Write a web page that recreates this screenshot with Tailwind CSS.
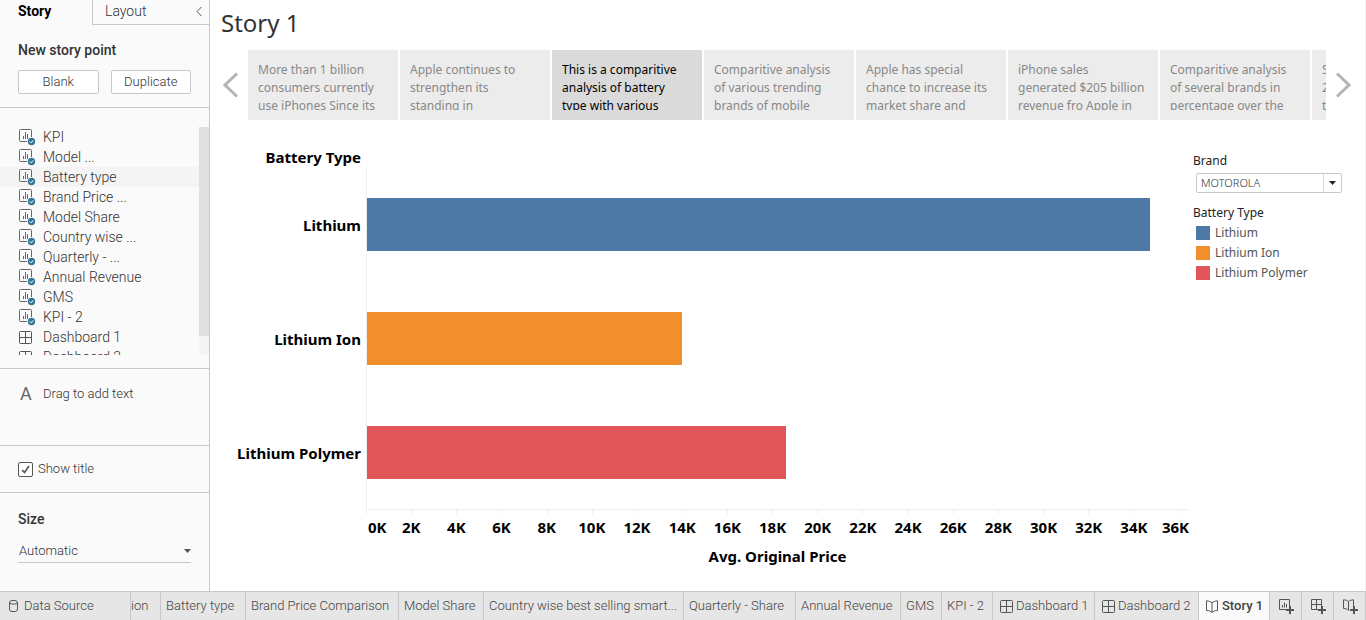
<!DOCTYPE html>
<html lang="en">
<head>
<meta charset="utf-8">
<title>Story 1</title>
<script src="https://cdn.jsdelivr.net/npm/@tailwindcss/browser@4"></script>
</head>
<body class="flex min-h-screen flex-col bg-white font-['Roboto',sans-serif] text-[13px] font-light text-[#333]">
<svg class="hidden" aria-hidden="true">
  <symbol id="sheet" viewBox="0 0 17 17">
    <path d="M12.500 8V1.500a1 1 0 0 0-1-1h-10a1 1 0 0 0-1 1v10a1 1 0 0 0 1 1H8" fill="none" stroke="#666"/>
    <path d="M4.500 7v3M6.500 3v7M8.500 5v5" stroke="#666" fill="none"/>
    <circle cx="12.500" cy="12.500" r="3.700" fill="#36789a"/>
    <path d="M10.800 12.500l1.300 1.300 2.200-2.400" stroke="#fff" fill="none"/>
  </symbol>
  <symbol id="dash" viewBox="0 0 13 13">
    <path d="M1.500.5h10a1 1 0 0 1 1 1v10a1 1 0 0 1-1 1h-10a1 1 0 0 1-1-1v-10a1 1 0 0 1 1-1zM6.500.5v12M.5 6.500h12" fill="none" stroke="#555"/>
  </symbol>
  <symbol id="book" viewBox="0 0 12 13">
    <path d="M6 2.800C5 1.800 3 1 .5.800v9.700c2.500 0 4.200.6 5.500 2 1.300-1.400 3-2 5.500-2V.8C9 1 7 1.800 6 2.800zv9.500" fill="none" stroke="#555"/>
  </symbol>
</svg>

<div class="flex flex-1">
  <aside class="flex w-[210px] shrink-0 flex-col border-r border-[#c8c8c8] bg-[#fafafa]">
    <div class="flex h-[25px] text-sm">
      <button class="w-[92px] pb-1 pl-[18px] text-left font-bold text-black">Story</button>
      <button class="flex flex-1 items-center justify-between border-b border-l border-[#c8c8c8] pr-1.5 pb-0.5 pl-3">Layout
        <svg class="h-[11px] w-2" viewBox="0 0 8 11" fill="none" stroke="#555"><path d="M6.500 1L2 5.500 6.500 10"/></svg>
      </button>
    </div>
    <section class="border-b border-[#c8c8c8] px-[18px] pt-[15px] pb-[13px]">
      <h2 class="text-sm leading-5 font-medium">New story point</h2>
      <div class="mt-2.5 flex gap-3">
        <button class="h-6 flex-1 rounded-xs border border-[#c8c8c8] bg-white">Blank</button>
        <button class="h-6 flex-1 rounded-xs border border-[#c8c8c8] bg-white">Duplicate</button>
      </div>
    </section>
    <section class="border-b border-[#c8c8c8] pt-[19px] pb-[13px]">
      <div class="flex h-[228px] overflow-hidden">
        <ul class="flex-1 text-sm leading-5">
          <li class="flex h-5 items-center pl-[19px]"><svg class="mr-[7px] h-[17px] w-[17px]"><use href="#sheet"/></svg>KPI</li>
          <li class="flex h-5 items-center pl-[19px]"><svg class="mr-[7px] h-[17px] w-[17px]"><use href="#sheet"/></svg>Model ...</li>
          <li class="flex h-5 items-center bg-[#f4f4f4] pl-[19px]"><svg class="mr-[7px] h-[17px] w-[17px]"><use href="#sheet"/></svg>Battery type</li>
          <li class="flex h-5 items-center pl-[19px]"><svg class="mr-[7px] h-[17px] w-[17px]"><use href="#sheet"/></svg>Brand Price ...</li>
          <li class="flex h-5 items-center pl-[19px]"><svg class="mr-[7px] h-[17px] w-[17px]"><use href="#sheet"/></svg>Model Share</li>
          <li class="flex h-5 items-center pl-[19px]"><svg class="mr-[7px] h-[17px] w-[17px]"><use href="#sheet"/></svg>Country wise ...</li>
          <li class="flex h-5 items-center pl-[19px]"><svg class="mr-[7px] h-[17px] w-[17px]"><use href="#sheet"/></svg>Quarterly - ...</li>
          <li class="flex h-5 items-center pl-[19px]"><svg class="mr-[7px] h-[17px] w-[17px]"><use href="#sheet"/></svg>Annual Revenue</li>
          <li class="flex h-5 items-center pl-[19px]"><svg class="mr-[7px] h-[17px] w-[17px]"><use href="#sheet"/></svg>GMS</li>
          <li class="flex h-5 items-center pl-[19px]"><svg class="mr-[7px] h-[17px] w-[17px]"><use href="#sheet"/></svg>KPI - 2</li>
          <li class="flex h-5 items-center pl-[19px]"><svg class="mr-[11px] h-[13px] w-[13px]"><use href="#dash"/></svg>Dashboard 1</li>
          <li class="flex h-5 items-center pl-[19px]"><svg class="mr-[11px] h-[13px] w-[13px]"><use href="#dash"/></svg>Dashboard 2</li>
        </ul>
        <div class="w-2.5 bg-[#f4f4f4]"><div class="h-[209px] bg-[#e0e0e0]"></div></div>
      </div>
    </section>
    <section class="flex h-[77px] items-start border-b border-[#c8c8c8] pt-[15px] leading-5">
      <span class="w-[43px] pl-5 text-lg leading-5 font-normal text-[#666]">A</span>Drag to add text
    </section>
    <section class="flex h-[47px] items-center border-b border-[#c8c8c8] pl-[18px]">
      <label class="flex items-center gap-[5px]">
        <span class="grid h-[15px] w-[15px] place-items-center">
          <input type="checkbox" checked class="col-start-1 row-start-1 h-[15px] w-[15px] appearance-none rounded-xs border border-[#555] bg-white">
          <svg class="pointer-events-none col-start-1 row-start-1 h-[9px] w-[9px]" viewBox="0 0 9 9" fill="none" stroke="#555" stroke-width="1.600"><path d="M1 5l2.500 2.500L8 1"/></svg>
        </span>Show title
      </label>
    </section>
    <section class="px-[18px] pt-4">
      <label for="size" class="block text-sm leading-5 font-medium">Size</label>
      <div class="mt-2.5 flex h-6 items-center border-b border-[#c8c8c8]">
        <select id="size" class="w-full flex-1 appearance-none bg-transparent pl-px outline-none"><option>Automatic</option></select>
        <svg class="pointer-events-none h-1 w-[7px]" viewBox="0 0 7 4" fill="#555"><path d="M0 0h7L3.500 4z"/></svg>
      </div>
    </section>
  </aside>

  <main class="flex min-w-0 flex-1 flex-col border-r border-[#f0f0f0] font-['Noto_Sans',sans-serif] font-normal">
    <h1 class="mt-[7px] pl-[11px] text-2xl leading-8">Story 1</h1>
    <nav class="mt-[11px] flex h-[70px] items-center">
      <button aria-label="Previous" class="flex w-[38px] shrink-0 pl-3"><svg class="h-[26px] w-4" viewBox="0 0 16 26" fill="none" stroke="#b4b4b4" stroke-width="3"><path d="M15 1.500L3 13l12 11.500"/></svg></button>
      <div class="flex min-w-0 flex-1 gap-0.5 overflow-hidden text-left text-xs leading-[18px] text-[#888]">
        <button class="h-[70px] w-[150px] shrink-0 bg-[#ececec] px-2.5 pt-[11px] pb-2.5 text-left"><span class="block h-[49px] overflow-hidden whitespace-nowrap">More than 1 billion<br>consumers currently<br>use iPhones Since its</span></button>
        <button class="h-[70px] w-[150px] shrink-0 bg-[#ececec] px-2.5 pt-[11px] pb-2.5 text-left"><span class="block h-[49px] overflow-hidden whitespace-nowrap">Apple continues to<br>strengthen its<br>standing in</span></button>
        <button class="h-[70px] w-[150px] shrink-0 bg-[#dadada] px-2.5 pt-[11px] pb-2.5 text-left text-black"><span class="block h-[49px] overflow-hidden whitespace-nowrap">This is a comparitive<br>analysis of battery<br>type with various</span></button>
        <button class="h-[70px] w-[150px] shrink-0 bg-[#ececec] px-2.5 pt-[11px] pb-2.5 text-left"><span class="block h-[49px] overflow-hidden whitespace-nowrap">Comparitive analysis<br>of various trending<br>brands of mobile</span></button>
        <button class="h-[70px] w-[150px] shrink-0 bg-[#ececec] px-2.5 pt-[11px] pb-2.5 text-left"><span class="block h-[49px] overflow-hidden whitespace-nowrap">Apple has special<br>chance to increase its<br>market share and</span></button>
        <button class="h-[70px] w-[150px] shrink-0 bg-[#ececec] px-2.5 pt-[11px] pb-2.5 text-left"><span class="block h-[49px] overflow-hidden whitespace-nowrap">iPhone sales<br>generated $205 billion<br>revenue fro Apple in</span></button>
        <button class="h-[70px] w-[150px] shrink-0 bg-[#ececec] px-2.5 pt-[11px] pb-2.5 text-left"><span class="block h-[49px] overflow-hidden whitespace-nowrap">Comparitive analysis<br>of several brands in<br>percentage over the</span></button>
        <button class="h-[70px] w-[150px] shrink-0 bg-[#ececec] px-2.5 pt-[11px] pb-2.5 text-left"><span class="block h-[49px] overflow-hidden whitespace-nowrap">S<br>2<br>t</span></button>
      </div>
      <button aria-label="Next" class="flex w-[39px] shrink-0 pl-2.5"><svg class="h-[26px] w-4" viewBox="0 0 16 26" fill="none" stroke="#b4b4b4" stroke-width="3"><path d="M1 1.500L13 13 1 24.500"/></svg></button>
    </nav>

    <div class="flex flex-1">
      <section class="flex min-w-0 flex-1 flex-col pt-[26px] pb-6 text-[15px] font-bold text-black">
        <h2 class="w-[151px] text-right leading-[22px]">Battery Type</h2>
        <div class="flex flex-1">
          <div class="flex w-[156px] shrink-0 flex-col pr-[5px] text-right">
            <div class="flex flex-1 items-center justify-end">Lithium</div>
            <div class="flex flex-1 items-center justify-end">Lithium Ion</div>
            <div class="flex flex-1 items-center justify-end">Lithium Polymer</div>
          </div>
          <div class="flex min-w-0 flex-1 flex-col border-b border-l border-[#efefef]">
            <div class="flex flex-1 items-center"><div class="h-[53px] bg-[#4e79a7]" style="width:95.200%"></div></div>
            <div class="flex flex-1 items-center"><div class="h-[53px] bg-[#f28e2b]" style="width:38.300%"></div></div>
            <div class="flex flex-1 items-center"><div class="h-[53px] bg-[#e15759]" style="width:51%"></div></div>
          </div>
        </div>
        <div class="ml-[156px]">
          <div class="flex h-1">
            <i class="flex-[200] border-l border-[#efefef]"></i><i class="flex-[200] border-l border-[#efefef]"></i><i class="flex-[200] border-l border-[#efefef]"></i><i class="flex-[200] border-l border-[#efefef]"></i><i class="flex-[200] border-l border-[#efefef]"></i><i class="flex-[200] border-l border-[#efefef]"></i><i class="flex-[200] border-l border-[#efefef]"></i><i class="flex-[200] border-l border-[#efefef]"></i><i class="flex-[200] border-l border-[#efefef]"></i><i class="flex-[200] border-l border-[#efefef]"></i><i class="flex-[200] border-l border-[#efefef]"></i><i class="flex-[200] border-l border-[#efefef]"></i><i class="flex-[200] border-l border-[#efefef]"></i><i class="flex-[200] border-l border-[#efefef]"></i><i class="flex-[200] border-l border-[#efefef]"></i><i class="flex-[200] border-l border-[#efefef]"></i><i class="flex-[200] border-l border-[#efefef]"></i><i class="flex-[200] border-l border-[#efefef]"></i><i class="flex-[44] border-l border-[#efefef]"></i>
          </div>
          <div class="mt-0.5 flex text-center leading-[22px]">
            <span class="min-w-0 flex-[100] text-left indent-0.5">0K</span><span class="min-w-0 flex-[200]">2K</span><span class="min-w-0 flex-[200]">4K</span><span class="min-w-0 flex-[200]">6K</span><span class="min-w-0 flex-[200]">8K</span><span class="min-w-0 flex-[200]">10K</span><span class="min-w-0 flex-[200]">12K</span><span class="min-w-0 flex-[200]">14K</span><span class="min-w-0 flex-[200]">16K</span><span class="min-w-0 flex-[200]">18K</span><span class="min-w-0 flex-[200]">20K</span><span class="min-w-0 flex-[200]">22K</span><span class="min-w-0 flex-[200]">24K</span><span class="min-w-0 flex-[200]">26K</span><span class="min-w-0 flex-[200]">28K</span><span class="min-w-0 flex-[200]">30K</span><span class="min-w-0 flex-[200]">32K</span><span class="min-w-0 flex-[200]">34K</span><span class="min-w-0 flex-[144] text-right">36K</span>
          </div>
          <p class="mt-[7px] text-center leading-[22px]">Avg. Original Price</p>
        </div>
      </section>
      <section class="w-[176px] shrink-0 pt-[33px] pr-6 pl-1 text-xs leading-4">
        <label for="brand" class="block text-[#222]">Brand</label>
        <div class="mt-1 ml-[3px] flex h-5 w-[146px] items-center rounded-xs border border-[#c8c8c8]">
          <select id="brand" class="h-full flex-1 appearance-none border-r border-[#d8d8d8] pl-1 text-[11px] font-light outline-none"><option>MOTOROLA</option></select>
          <svg class="mx-[5px] h-1 w-[7px]" viewBox="0 0 7 4" fill="#222"><path d="M0 0h7L3.500 4z"/></svg>
        </div>
        <h3 class="mt-3 text-[#222]">Battery Type</h3>
        <ul class="mt-0.5 ml-[3px] leading-5 text-[#555]">
          <li class="flex items-center gap-[5px]"><span class="h-3.5 w-3.5 bg-[#4e79a7]"></span>Lithium</li>
          <li class="flex items-center gap-[5px]"><span class="h-3.5 w-3.5 bg-[#f28e2b]"></span>Lithium Ion</li>
          <li class="flex items-center gap-[5px]"><span class="h-3.5 w-3.5 bg-[#e15759]"></span>Lithium Polymer</li>
        </ul>
      </section>
    </div>
  </main>
</div>

<footer class="flex h-[29px] border-t border-[#c8c8c8] bg-[#e6e6e6] whitespace-nowrap text-[#444]">
  <button class="flex w-[131px] shrink-0 items-center border-r border-[#c8c8c8] pl-[9px]"><svg class="mr-1.5 h-3 w-[9px]" viewBox="0 0 9 12" fill="none" stroke="#555"><rect x=".5" y=".5" width="8" height="11" rx="2.500"/><path d="M.5 3c1.500 1.500 6.500 1.500 8 0"/></svg>Data Source</button>
  <button class="w-[30px] shrink-0 border-r border-[#c8c8c8] text-left">ion</button>
  <button class="w-[85px] shrink-0 border-r border-[#c8c8c8] pl-[5px] text-left">Battery type</button>
  <button class="w-[153px] shrink-0 border-r border-[#c8c8c8] pl-[5px] text-left">Brand Price Comparison</button>
  <button class="w-[85px] shrink-0 border-r border-[#c8c8c8] pl-[5px] text-left">Model Share</button>
  <button class="w-[200px] shrink-0 border-r border-[#c8c8c8] pl-[5px] text-left">Country wise best selling smart...</button>
  <button class="w-[112px] shrink-0 border-r border-[#c8c8c8] pl-[5px] text-left">Quarterly - Share</button>
  <button class="w-[105px] shrink-0 border-r border-[#c8c8c8] pl-[5px] text-left">Annual Revenue</button>
  <button class="w-[41px] shrink-0 border-r border-[#c8c8c8] pl-[5px] text-left">GMS</button>
  <button class="w-[51px] shrink-0 border-r border-[#c8c8c8] pl-[5px] text-left">KPI - 2</button>
  <button class="flex w-[102px] shrink-0 items-center border-r border-[#c8c8c8] pl-[7px]"><svg class="mr-[3px] h-[13px] w-[13px]"><use href="#dash"/></svg>Dashboard 1</button>
  <button class="flex w-[104px] shrink-0 items-center border-r border-[#c8c8c8] pl-[7px]"><svg class="mr-[3px] h-[13px] w-[13px]"><use href="#dash"/></svg>Dashboard 2</button>
  <button class="flex w-[71px] shrink-0 items-center border-r border-[#c8c8c8] bg-[#fafafa] pl-[7px] font-medium"><svg class="mr-1 h-[13px] w-3"><use href="#book"/></svg>Story 1</button>
  <button aria-label="New worksheet" class="flex w-8 shrink-0 items-center border-r border-[#c8c8c8] pl-[9px]"><svg class="h-[15px] w-[15px]" viewBox="0 0 15 15" fill="none" stroke="#555"><path d="M10.500 7V.5H.5v10H7M3.500 6v2.500M5.500 3.500v5M7.500 5v3.500"/><path d="M11 7v8M7 11h8" stroke-width="2"/></svg></button>
  <button aria-label="New dashboard" class="flex w-8 shrink-0 items-center border-r border-[#c8c8c8] pl-[9px]"><svg class="h-[15px] w-[15px]" viewBox="0 0 15 15" fill="none" stroke="#555"><path d="M10.500 7V.5H.5v10H7M5.500.5v10M.5 5.500h10"/><path d="M11 7v8M7 11h8" stroke-width="2"/></svg></button>
  <button aria-label="New story" class="flex w-8 shrink-0 items-center border-r border-[#c8c8c8] pl-[9px]"><svg class="h-[15px] w-[15px]" viewBox="0 0 15 15" fill="none" stroke="#555"><path d="M10.500 7V.800C8.500 1 6.500 1.500 5.500 2.500 4.500 1.500 2.500 1 .5.800v8.700c2 0 3.800.5 5 2V2.500"/><path d="M11 7v8M7 11h8" stroke-width="2"/></svg></button>
</footer>
</body>
</html>
